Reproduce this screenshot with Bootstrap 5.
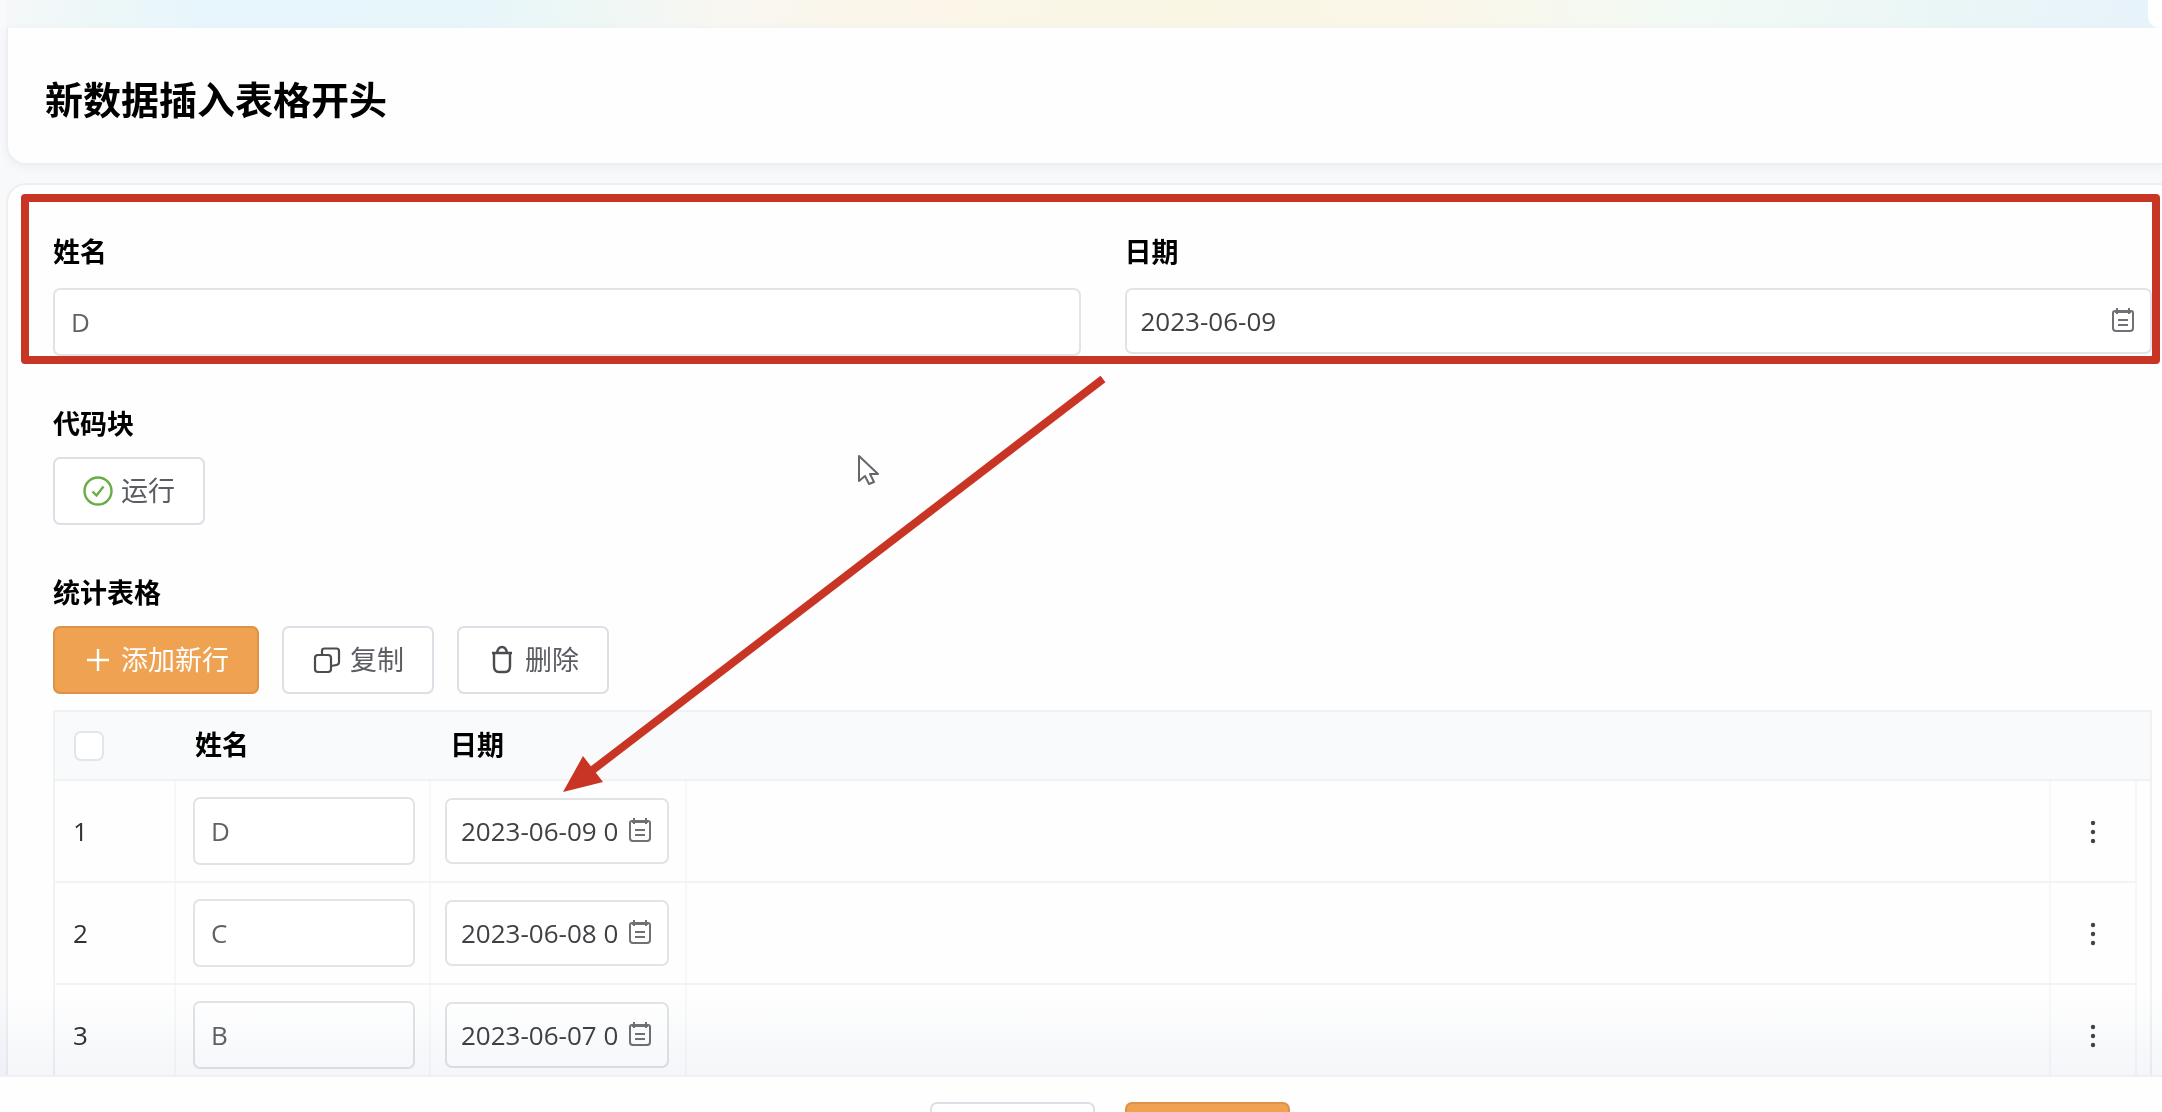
<!DOCTYPE html>
<html lang="zh-CN">
<head>
<meta charset="utf-8">
<meta name="viewport" content="width=device-width, initial-scale=1">
<title>新数据插入表格开头</title>
<link href="https://cdn.jsdelivr.net/npm/bootstrap@5.3.0/dist/css/bootstrap.min.css" rel="stylesheet">
<style>
  body { font-family: "Open Sans", "Noto Sans CJK SC", sans-serif; font-size: 26px; color: #303133; background: #f8f9fb; }
  .page-body { min-height: 0; padding-left: 6px; }
  .banner { height: 28px; background: linear-gradient(90deg, #f5f8f9 0, #ecf7f8 5%, #e7f6fc 9%, #e7f6fb 21%, #ecf7f6 26%, #f8f7f2 33%, #fbf6ea 40%, #faf6e4 55%, #faf7ea 67%, #f2faf5 78%, #eaf6f6 90%, #e7f3fa 99%); }
  .banner-corner { width: 14px; height: 28px; background: #fff; border-bottom-left-radius: 12px; }
  .panel { background: #fefefe; border: 2px solid #eeeff1; border-right: 0; }
  .panel-title { border-top: 0; border-bottom-left-radius: 20px; padding: 46px 37px 39px; box-shadow: 0 2px 10px #eceef2; margin-bottom: 18px; }
  .panel-title h1 { font-size: 38px; line-height: 50px; font-weight: 700; color: #000; }
  .panel-form { border-top-left-radius: 20px; padding: 49px 10px 0 45px; }
  .fade-bottom { height: 80px; background: linear-gradient(#fff, #f5f7fa); mix-blend-mode: multiply; pointer-events: none; }
  .field-title { display: block; font-size: 27px; line-height: 36px; font-weight: 700; color: #000; margin-bottom: 15px; }
  .section { margin-top: 50px; }
  .fields { gap: 44px; }
  .fields .field-title { margin-bottom: 18px; }
  .fields > div { flex: 1 1 0; }
  .fields-frame { left: -32px; right: -8px; top: -40px; bottom: -8px; border: 8px solid #c93524; border-radius: 4px; pointer-events: none; }
  .box { height: 68px; border: 2px solid #e2e3e6; border-radius: 7px; font-size: 26px; padding: 0 16px; color: #606266; background: #fff; }
  .box-date { height: 66px; padding: 0 14px; color: #404145; }
  .box-icon { width: 22px; height: 28px; right: 18px; top: 18px; color: #707175; }
  .tool { height: 68px; font-size: 27px; line-height: 36px; border: 2px solid #dcdfe6; border-radius: 7px; padding: 0 28px; color: #5b5d63; background: #fff; }
  .tool:hover { border-color: #f0a352; color: #5b5d63; }
  .tool-main, .tool-main:hover { color: #fff; background: #eea252; border-color: #dc9347; }
  .tool svg { width: 30px; height: 30px; flex: none; }
  .tools { gap: 23px; }
  .grid { table-layout: fixed; border: 2px solid #f0f1f3; border-bottom: 0; }
  .grid th { height: 69px; padding: 0 20px; font-size: 27px; background: #f9fafc; border-bottom: 2px solid #f0f1f3; color: #000; vertical-align: middle; }
  .grid td { height: 102px; padding: 0 18px; border-bottom: 2px solid #f2f3f5; border-right: 2px solid #f6f7f8; vertical-align: middle; background: #fefefe; }
  .grid th:first-child { padding-left: 19px; }
  .grid td:last-child { border: 0; padding: 0; }
  .grid .field-cell { padding: 0 14px 0 17px; }
  .grid .date-cell { padding: 0 16px 0 14px; }
  .grid .date-cell .box { padding-right: 46px; }
  .grid .form-check-input { width: 30px; height: 30px; margin: 0; border: 2px solid #e3e5e9; border-radius: 7px; display: block; }
  .more { color: #444; line-height: 0; }
  .page-foot { height: 37px; padding-top: 25px; background: #fefefe; border-top: 2px solid #eff0f2; }
  .page-foot .btn { width: 165px; flex: none; }
  .foot-inner { margin-left: 58px; gap: 30px; }
  .overlay { left: 0; top: 0; width: 1200px; height: 820px; pointer-events: none; }
</style>
<script src="https://cdn.jsdelivr.net/npm/bootstrap@5.3.0/dist/js/bootstrap.bundle.min.js"></script>
</head>
<body>
<svg width="0" height="0" class="position-absolute" aria-hidden="true">
  <symbol id="i-date" viewBox="0 0 22 28"><path d="M3 5h16q2 0 2 2v15q0 3-3 3H4q-3 0-3-3V7q0-2 2-2zM5 2v6M17 2v6M3 6h16M6 14h10M6 19h10" fill="none" stroke="currentColor" stroke-width="2"/></symbol>
  <symbol id="i-more" viewBox="0 0 6 24"><circle cx="3" cy="3" r="2.2"/><circle cx="3" cy="12" r="2.2"/><circle cx="3" cy="21" r="2.2"/></symbol>
</svg>
<div class="vh-100 d-flex flex-column overflow-hidden position-relative">
  <main class="page-body flex-grow-1 overflow-hidden position-relative">
    <div class="banner d-flex justify-content-end"><div class="banner-corner"></div></div>
    <header class="panel panel-title"><h1 class="m-0">新数据插入表格开头</h1></header>
    <form class="panel panel-form">
      <div class="fields d-flex position-relative">
        <div>
          <label class="field-title" for="name">姓名</label>
          <input class="form-control box" id="name" type="text" value="D">
        </div>
        <div>
          <label class="field-title" for="date">日期</label>
          <div class="position-relative">
            <input class="form-control box box-date" id="date" type="text" value="2023-06-09">
            <svg class="box-icon position-absolute"><use href="#i-date"/></svg>
          </div>
        </div>
        <div class="fields-frame position-absolute"></div>
      </div>

      <section class="section">
        <h2 class="field-title">代码块</h2>
        <button type="button" class="btn tool d-inline-flex align-items-center gap-2">
          <svg viewBox="0 0 30 30" fill="none" stroke="#67ae45" stroke-width="2.4"><circle cx="15" cy="15" r="13.5"/><path d="M9.500 15.500l4 4L20.500 10.500"/></svg>运行</button>
      </section>

      <section class="section">
        <h2 class="field-title">统计表格</h2>
        <div class="tools d-flex mb-3">
          <button type="button" class="btn tool tool-main d-inline-flex align-items-center gap-2">
            <svg viewBox="0 0 30 30" fill="none" stroke="currentColor" stroke-width="2.4"><path d="M15 4v22M4 15h22"/></svg>添加新行</button>
          <button type="button" class="btn tool d-inline-flex align-items-center gap-2">
            <svg viewBox="0 0 30 30" fill="none" stroke="#4b4c50" stroke-width="2.2"><rect x="3" y="10" width="16" height="17" rx="3"/><path d="M10 10V6q0-2.500 2.500-2.500h12Q27 3.500 27 6v11q0 2.500-2.500 3L19 21"/></svg>复制</button>
          <button type="button" class="btn tool d-inline-flex align-items-center gap-2">
            <svg viewBox="0 0 30 30" fill="none" stroke="#4b4c50" stroke-width="2.400"><path d="M5 8h20M7 8v13q0 6 5 6h6q5 0 5-6V8M10 8q1-6 5-6t5 6"/></svg>删除</button>
        </div>

        <table class="grid w-100">
          <colgroup><col style="width:121px"><col style="width:255px"><col style="width:256px"><col><col style="width:86px"><col style="width:15px"></colgroup>
          <thead>
            <tr><th><input class="form-check-input" type="checkbox" aria-label="全选"></th><th>姓名</th><th>日期</th><th></th><th></th><th class="p-0"></th></tr>
          </thead>
          <tbody>
            <tr>
              <td>1</td>
              <td class="field-cell"><input class="form-control box" type="text" value="D" aria-label="姓名 1"></td>
              <td class="date-cell"><div class="position-relative"><input class="form-control box box-date" type="text" value="2023-06-09 0" aria-label="日期 1"><svg class="box-icon position-absolute"><use href="#i-date"/></svg></div></td>
              <td></td>
              <td class="text-center p-0"><button type="button" class="btn more p-2 border-0" aria-label="更多"><svg width="6" height="24" fill="currentColor"><use href="#i-more"/></svg></button></td><td></td>
            </tr>
            <tr>
              <td>2</td>
              <td class="field-cell"><input class="form-control box" type="text" value="C" aria-label="姓名 2"></td>
              <td class="date-cell"><div class="position-relative"><input class="form-control box box-date" type="text" value="2023-06-08 0" aria-label="日期 2"><svg class="box-icon position-absolute"><use href="#i-date"/></svg></div></td>
              <td></td>
              <td class="text-center p-0"><button type="button" class="btn more p-2 border-0" aria-label="更多"><svg width="6" height="24" fill="currentColor"><use href="#i-more"/></svg></button></td><td></td>
            </tr>
            <tr>
              <td>3</td>
              <td class="field-cell"><input class="form-control box" type="text" value="B" aria-label="姓名 3"></td>
              <td class="date-cell"><div class="position-relative"><input class="form-control box box-date" type="text" value="2023-06-07 0" aria-label="日期 3"><svg class="box-icon position-absolute"><use href="#i-date"/></svg></div></td>
              <td></td>
              <td class="text-center p-0"><button type="button" class="btn more p-2 border-0" aria-label="更多"><svg width="6" height="24" fill="currentColor"><use href="#i-more"/></svg></button></td><td></td>
            </tr>
          </tbody>
        </table>
      </section>
    </form>
    <div class="fade-bottom position-absolute start-0 end-0 bottom-0"></div>
  </main>
  <footer class="page-foot d-flex justify-content-center align-items-start overflow-hidden flex-shrink-0">
    <div class="foot-inner d-flex">
      <button type="button" class="btn tool" aria-label="取消"></button>
      <button type="button" class="btn tool tool-main" aria-label="提交"></button>
    </div>
  </footer>
  <!-- arrow from the form fields to the first table row, and the mouse pointer -->
  <svg class="overlay position-absolute" viewBox="0 0 1200 820" aria-hidden="true">
    <path d="M1103 379L590 772" stroke="#c93524" stroke-width="8" fill="none"/>
    <path d="M563 792L583 756L603 782z" fill="#c93524"/>
    <path d="M859 456v25l6-5 4 8 5-2-4-8h8z" fill="#fff" stroke="#66676b" stroke-width="2" stroke-linejoin="round"/>
  </svg>
</div>
</body>
</html>
